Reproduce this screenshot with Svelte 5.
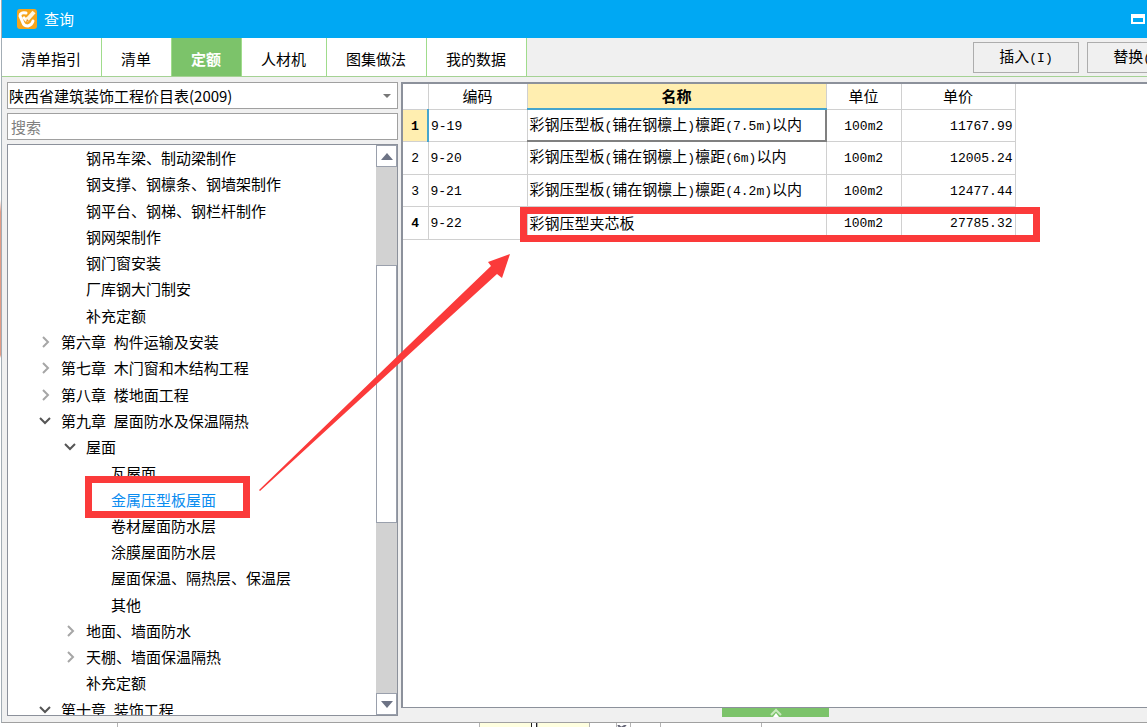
<script lang="ts">
  type Node = { label: string; depth: number; state?: 'open' | 'closed'; selected?: boolean };

  const tabs = ['清单指引', '清单', '定额', '人材机', '图集做法', '我的数据'];
  let activeTab = $state('定额');
  let search = $state('');

  const nodes: Node[] = [
    { label: '钢吊车梁、制动梁制作', depth: 2 },
    { label: '钢支撑、钢檩条、钢墙架制作', depth: 2 },
    { label: '钢平台、钢梯、钢栏杆制作', depth: 2 },
    { label: '钢网架制作', depth: 2 },
    { label: '钢门窗安装', depth: 2 },
    { label: '厂库钢大门制安', depth: 2 },
    { label: '补充定额', depth: 2 },
    { label: '第六章 构件运输及安装', depth: 1, state: 'closed' },
    { label: '第七章 木门窗和木结构工程', depth: 1, state: 'closed' },
    { label: '第八章 楼地面工程', depth: 1, state: 'closed' },
    { label: '第九章 屋面防水及保温隔热', depth: 1, state: 'open' },
    { label: '屋面', depth: 2, state: 'open' },
    { label: '瓦屋面', depth: 3 },
    { label: '金属压型板屋面', depth: 3, selected: true },
    { label: '卷材屋面防水层', depth: 3 },
    { label: '涂膜屋面防水层', depth: 3 },
    { label: '屋面保温、隔热层、保温层', depth: 3 },
    { label: '其他', depth: 3 },
    { label: '地面、墙面防水', depth: 2, state: 'closed' },
    { label: '天棚、墙面保温隔热', depth: 2, state: 'closed' },
    { label: '补充定额', depth: 2 },
    { label: '第十章 装饰工程', depth: 1, state: 'open' }
  ];

  const rows = [
    { code: '9-19', name: '彩钢压型板(铺在钢檩上)檩距(7.5m)以内', unit: '100m2', price: '11767.99' },
    { code: '9-20', name: '彩钢压型板(铺在钢檩上)檩距(6m)以内', unit: '100m2', price: '12005.24' },
    { code: '9-21', name: '彩钢压型板(铺在钢檩上)檩距(4.2m)以内', unit: '100m2', price: '12477.44' },
    { code: '9-22', name: '彩钢压型夹芯板', unit: '100m2', price: '27785.32' }
  ];

  // half-width runs get the narrower mono face
  function runs(text: string) {
    return text.split(/([ -~]+)/).filter(Boolean);
  }
</script>

{#snippet mixed(text: string)}
  {#each runs(text) as run}<span class:half={/^[ -~]+$/.test(run)}>{run}</span>{/each}
{/snippet}

<div class="desktop">
  <div class="window">
    <header class="titlebar">
      <svg class="logo" viewBox="0 0 20 20" aria-hidden="true">
        <rect width="20" height="20" rx="3" fill="#f6a51c" />
        <path d="M9 4Q3 3 3 7L6 14Q7 17 11 17Q15 16 16 12" fill="none" stroke="#fff" stroke-width="3" stroke-linecap="round" />
        <path d="M6 8L9 11L11 9" fill="none" stroke="#fff" stroke-width="3" />
        <path d="M17 3L9 12" fill="none" stroke="#fff6e0" stroke-width="4" />
        <path d="M9 13L10 10L12 12Z" fill="#ef8f17" />
      </svg>
      <h1>查询</h1>
      <button class="minimize" aria-label="最小化">
        <svg width="14" height="10" viewBox="0 0 14 10"><path d="M0 0H14V10H0ZM2 4V8H12V4Z" fill="#fff" fill-rule="evenodd" /></svg>
      </button>
    </header>

    <div class="toolbar">
      <nav class="tabs">
        {#each tabs as tab}
          <button class="tab" class:active={tab === activeTab} onclick={() => (activeTab = tab)}>{tab}</button>
        {/each}
      </nav>
      <div class="actions">
        <button class="action">{@render mixed('插入(I)')}</button>
        <button class="action">{@render mixed('替换(R)')}</button>
      </div>
    </div>

    <main>
      <aside>
        <div class="select-wrap">
          <select aria-label="定额库">
            <option>陕西省建筑装饰工程价目表(2009)</option>
          </select>
          <svg width="8" height="4" viewBox="0 0 8 4" aria-hidden="true"><path d="M0 0H8L4 4Z" fill="#777" /></svg>
        </div>
        <input type="text" placeholder="搜索" aria-label="搜索" bind:value={search} />
        <div class="tree">
          <ul>
            {#each nodes as node}
              <li class="depth-{node.depth}" class:selected={node.selected}>
                <span class="twisty">
                  {#if node.state === 'open'}
                    <svg width="12" height="10" viewBox="0 0 12 10"><path d="M1 2L6 7L11 2" fill="none" stroke="#555" stroke-width="2" /></svg>
                  {:else if node.state === 'closed'}
                    <svg width="12" height="12" viewBox="0 0 12 12"><path d="M4 1L9 6L4 11" fill="none" stroke="#a6a6a6" stroke-width="2" /></svg>
                  {/if}
                </span>
                {@render mixed(node.label)}
              </li>
            {/each}
          </ul>
          <div class="scrollbar">
            <button aria-label="向上滚动"><svg width="12" height="7" viewBox="0 0 12 7"><path d="M0 7L6 0L12 7Z" fill="#6d7385" /></svg></button>
            <div class="track"><div class="thumb"></div></div>
            <button aria-label="向下滚动"><svg width="12" height="7" viewBox="0 0 12 7"><path d="M0 0H12L6 7Z" fill="#6d7385" /></svg></button>
          </div>
        </div>
      </aside>

      <section>
        <table>
          <colgroup>
            <col class="c-index" /><col class="c-code" /><col class="c-name" /><col class="c-unit" /><col class="c-price" />
          </colgroup>
          <thead>
            <tr><th></th><th>编码</th><th class="current">名称</th><th>单位</th><th>单价</th></tr>
          </thead>
          <tbody>
            {#each rows as row, i}
              <tr class:current={i === 0}>
                <td class="index" class:strong={i === 3}>{@render mixed(String(i + 1))}</td>
                <td>{@render mixed(row.code)}</td>
                <td class="name">{@render mixed(row.name)}</td>
                <td class="unit">{@render mixed(row.unit)}</td>
                <td class="price">{@render mixed(row.price)}</td>
              </tr>
            {/each}
          </tbody>
        </table>
      </section>
    </main>

    <footer>
      <button class="expander" aria-label="展开">
        <svg width="14" height="9" viewBox="0 0 14 9"><path d="M2 7L7 2L12 7" fill="none" stroke="#c9e8be" stroke-width="2" /><path d="M4 9L7 5L10 9Z" fill="#fff" /></svg>
      </button>
    </footer>
  </div>

  <!-- top edge of the worksheet under the dialog -->
  <div class="sheet">
    <span class="cell wide"></span>
    <span class="cell yellow"></span>
    <span class="cell caret"></span>
    <span class="cell yellow"></span>
    <span class="cell narrow"></span>
    <span class="cell check">
      <svg width="10" height="4" viewBox="0 0 10 4" aria-hidden="true"><path d="M1 0L4 3L9 0" fill="none" stroke="#667" stroke-width="2" /></svg>
    </span>
    <span class="cell narrow"></span>
    <span class="cell last"></span>
    <span class="cell"></span>
  </div>

  <div class="mark mark-tree"></div>
  <div class="mark mark-row"></div>
  <svg class="arrow" width="254" height="240" viewBox="0 0 254 240" aria-hidden="true">
    <path d="M0 237L181 62L232 13L229 9L251 1L243 25L238 21L181 73L1 238Z" fill="#fb3a3a" />
  </svg>
</div>

<style>
  :global(body) {
    margin: 0;
  }

  .desktop {
    position: relative;
    display: flex;
    flex-direction: column;
    box-sizing: border-box;
    height: 100vh;
    min-height: 400px;
    padding-left: 1px;
    overflow: hidden;
    background: linear-gradient(#fff 200px, #e39b85 212px, #e39b85 355px, #fff 358px);
    color: #000;
    font: 15px/20px 'Noto Sans CJK SC', sans-serif;
  }

  button,
  input,
  select {
    box-sizing: border-box;
    margin: 0;
    padding: 0;
    border: 0;
    border-radius: 0;
    background: none;
    color: inherit;
    font: inherit;
  }

  .half {
    font-family: 'Liberation Mono', monospace;
    font-size: 13px;
    white-space: pre;
  }

  .window {
    display: flex;
    flex: 1;
    flex-direction: column;
    min-height: 0;
    border-bottom: 1px solid #a0a0a0;
    border-left: 1px solid #a3adb5;
    background: #f0f0f0;
  }

  .titlebar {
    display: flex;
    align-items: center;
    gap: 7px;
    height: 38px;
    padding: 0 2px 0 15px;
    background: #00a8f3;
    color: #fff;
  }

  .logo {
    width: 20px;
    height: 20px;
  }

  h1 {
    margin: 0;
    font-size: 15px;
    font-weight: 400;
  }

  .minimize {
    display: flex;
    margin-left: auto;
  }

  .toolbar {
    display: flex;
    align-items: stretch;
    height: 38px;
    border-bottom: 1px solid #a5d294;
  }

  .tabs {
    display: flex;
  }

  .tab {
    padding: 3px 20px 0 19px;
    border-right: 1px solid #a0dc8c;
    background: #fff;
    white-space: nowrap;
  }

  .tab.active {
    background: #7cc36a;
    color: #fff;
    font-weight: 700;
  }

  .actions {
    display: flex;
    gap: 8px;
    align-items: center;
    margin: 0 -46px 0 auto;
  }

  .action {
    width: 106px;
    height: 31px;
    border: 1px solid #adadad;
    white-space: nowrap;
  }

  main {
    display: flex;
    flex: 1;
    gap: 3px;
    min-height: 0;
    padding-top: 5px;
  }

  aside {
    display: flex;
    flex: 0 0 391px;
    flex-direction: column;
    gap: 4px;
    margin-left: 5px;
  }

  .select-wrap {
    display: flex;
    align-items: center;
    height: 27px;
    box-sizing: border-box;
    padding-right: 6px;
    border: 1px solid #a0a0a0;
    background: #fff;
  }

  select {
    flex: 1;
    appearance: none;
    padding-left: 1px;
  }

  input {
    height: 27px;
    padding: 0 3px;
    border: 1px solid #a0a0a0;
    background: #fff;
  }

  input::placeholder {
    color: #808080;
    opacity: 1;
  }

  .tree {
    display: flex;
    flex: 1;
    min-height: 0;
    overflow: hidden;
    border: 1px solid #8c919b;
    background: #fff;
  }

  ul {
    display: flex;
    flex: 1;
    flex-direction: column;
    height: 578px;
    margin: 0;
    padding: 0;
    list-style: none;
  }

  li {
    display: flex;
    flex: 1;
    align-items: center;
    white-space: pre;
  }

  .twisty {
    display: flex;
    width: 22px;
  }

  .depth-1 {
    padding-left: 31px;
  }

  .depth-2 {
    padding-left: 56px;
  }

  .depth-3 {
    padding-left: 81px;
  }

  .selected {
    color: #0a8cf0;
  }

  .scrollbar {
    display: flex;
    flex: 0 0 21px;
    flex-direction: column;
    background: #d2d2d2;
  }

  .scrollbar button {
    display: flex;
    align-items: center;
    justify-content: center;
    height: 22px;
    border: 1px solid #9aa0ac;
    background: #fff;
  }

  .track {
    flex: 1;
  }

  .thumb {
    box-sizing: border-box;
    height: 49%;
    margin-top: 98px;
    border: 1px solid #9aa0ac;
    background: #fff;
  }

  section {
    flex: 1;
    min-width: 0;
    margin-bottom: 8px;
    border: 2px solid #8c919b;
    border-right: 0;
    border-bottom-width: 1px;
    background: #fff;
  }

  table {
    width: 612px;
    table-layout: fixed;
    border-collapse: collapse;
  }

  .c-index {
    width: 25px;
  }

  .c-code {
    width: 99px;
  }

  .c-name {
    width: 299px;
  }

  .c-unit {
    width: 75px;
  }

  .c-price {
    width: 114px;
  }

  th,
  td {
    box-sizing: border-box;
    padding: 0 2px;
    border: 1px solid #d0d0d0;
    border-top: 0;
    border-left: 0;
    white-space: nowrap;
  }

  th {
    height: 25px;
    font-weight: 400;
  }

  th.current {
    border-bottom: 2px solid #46a5cd;
    background: #ffeeb0;
    font-weight: 700;
  }

  td {
    height: 32px;
  }

  tr:nth-child(even) td {
    height: 33px;
  }

  .index,
  .unit {
    text-align: center;
  }

  .strong {
    font-weight: 700;
  }

  .current .index {
    border-right: 2px solid #46a5cd;
    background: #ffeeb0;
    font-weight: 700;
  }

  .current .name {
    border-right: 2px solid #808080;
    border-bottom: 2px solid #808080;
    border-left: 1px solid #808080;
  }

  .price {
    text-align: right;
  }

  footer {
    display: flex;
    height: 6px;
  }

  .expander {
    display: flex;
    justify-content: center;
    width: 107px;
    height: 9px;
    margin: -8px 0 0 720px;
    background: #7cc36a;
  }

  .sheet {
    display: flex;
    height: 4px;
    padding-left: 116px;
    background: #fff;
  }

  .cell {
    box-sizing: border-box;
    flex: 0 0 auto;
    width: 52px;
    border-left: 1px solid #b4b4b4;
  }

  .cell.wide {
    width: 362px;
  }

  .cell.yellow {
    background: #ffffe0;
  }

  .cell.caret {
    width: 6px;
    border: solid #222;
    border-width: 0 1px;
  }

  .cell.yellow + .narrow {
    width: 27px;
  }

  .cell.check {
    width: 14px;
    line-height: 0;
  }

  .cell.narrow {
    width: 30px;
  }

  .cell.last {
    width: 101px;
  }

  .mark,
  .arrow {
    position: absolute;
    pointer-events: none;
  }

  .mark {
    box-sizing: border-box;
    border: 7px solid #fb3a3a;
  }

  .mark-tree {
    top: 476px;
    left: 85px;
    width: 165px;
    height: 42px;
  }

  .mark-row {
    top: 207px;
    left: 520px;
    width: 520px;
    height: 35px;
  }

  .arrow {
    top: 253px;
    left: 259px;
  }
</style>
